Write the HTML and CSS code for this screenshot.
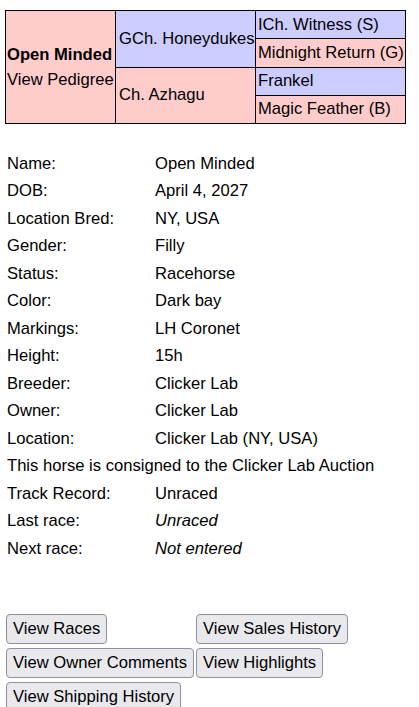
FILE: index.html
```html
<!DOCTYPE html>
<html>
<head>
<meta charset="utf-8">
<link rel="stylesheet" href="styles.css">
</head>
<body>
<div class="pedigree">
  <div class="cell pink main">
    <div class="name">Open Minded</div>
    <div class="link">View Pedigree</div>
  </div>
  <div class="cell blue sire">GCh. Honeydukes</div>
  <div class="cell blue">ICh. Witness (S)</div>
  <div class="cell pink">Midnight Return (G)</div>
  <div class="cell pink dam">Ch. Azhagu</div>
  <div class="cell blue">Frankel</div>
  <div class="cell pink">Magic Feather (B)</div>
</div>

<div class="info">
  <div class="label">Name:</div><div class="value">Open Minded</div>
  <div class="label">DOB:</div><div class="value">April 4, 2027</div>
  <div class="label">Location Bred:</div><div class="value">NY, USA</div>
  <div class="label">Gender:</div><div class="value">Filly</div>
  <div class="label">Status:</div><div class="value">Racehorse</div>
  <div class="label">Color:</div><div class="value">Dark bay</div>
  <div class="label">Markings:</div><div class="value">LH Coronet</div>
  <div class="label">Height:</div><div class="value">15h</div>
  <div class="label">Breeder:</div><div class="value">Clicker Lab</div>
  <div class="label">Owner:</div><div class="value">Clicker Lab</div>
  <div class="label">Location:</div><div class="value">Clicker Lab (NY, USA)</div>
  <div class="full">This horse is consigned to the Clicker Lab Auction</div>
  <div class="label">Track Record:</div><div class="value">Unraced</div>
  <div class="label">Last race:</div><div class="value em">Unraced</div>
  <div class="label">Next race:</div><div class="value em">Not entered</div>
</div>

<div class="actions">
  <button class="btn">View Races</button>
  <button class="btn">View Sales History</button>
  <button class="btn">View Owner Comments</button>
  <button class="btn">View Highlights</button>
  <button class="btn">View Shipping History</button>
</div>
</body>
</html>
```
FILE: styles.css
```css
html, body {
  margin: 0;
  padding: 0;
  background: #ffffff;
}
body {
  padding: 10px 5px 0 5px;
  font-family: "Liberation Sans", Arial, sans-serif;
  font-size: 16.6px;
  color: #000000;
}
.pedigree {
  width: 401px;
  height: 114px;
  box-sizing: border-box;
  display: grid;
  grid-template-columns: 109px 139px 1fr;
  grid-template-rows: repeat(4, 1fr);
  gap: 1px;
  padding: 1px;
  background: #000000;
}
.cell {
  display: flex;
  align-items: center;
  padding-left: 2px;
  white-space: nowrap;
}
.pink { background: #ffcccc; }
.blue { background: #ccccff; }
.main {
  grid-row: 1 / 5;
  grid-column: 1;
  flex-direction: column;
  align-items: flex-start;
  justify-content: center;
  padding-left: 1px;
  line-height: 25px;
}
.main .name { font-weight: bold; }
.sire { grid-row: 1 / 3; grid-column: 2; padding-left: 3px; }
.dam { grid-row: 3 / 5; grid-column: 2; padding-left: 3px; }
.info {
  margin-top: 26px;
  padding-left: 2px;
  display: grid;
  grid-template-columns: 148px 1fr;
  grid-auto-rows: 27.5px;
  align-items: center;
}
.full { grid-column: 1 / 3; }
.em { font-style: italic; }
.actions {
  margin-top: 51px;
  margin-left: 1px;
  display: grid;
  grid-template-columns: auto auto;
  justify-content: start;
  justify-items: start;
  column-gap: 2px;
  row-gap: 4px;
}
.btn {
  font-family: "Liberation Sans", Arial, sans-serif;
  font-size: 16.6px;
  color: #000000;
  background: #e9e9ed;
  border: 1px solid #8f8f9d;
  border-radius: 4px;
  padding: 5px 6px;
  line-height: 18px;
  margin: 0;
}
```
